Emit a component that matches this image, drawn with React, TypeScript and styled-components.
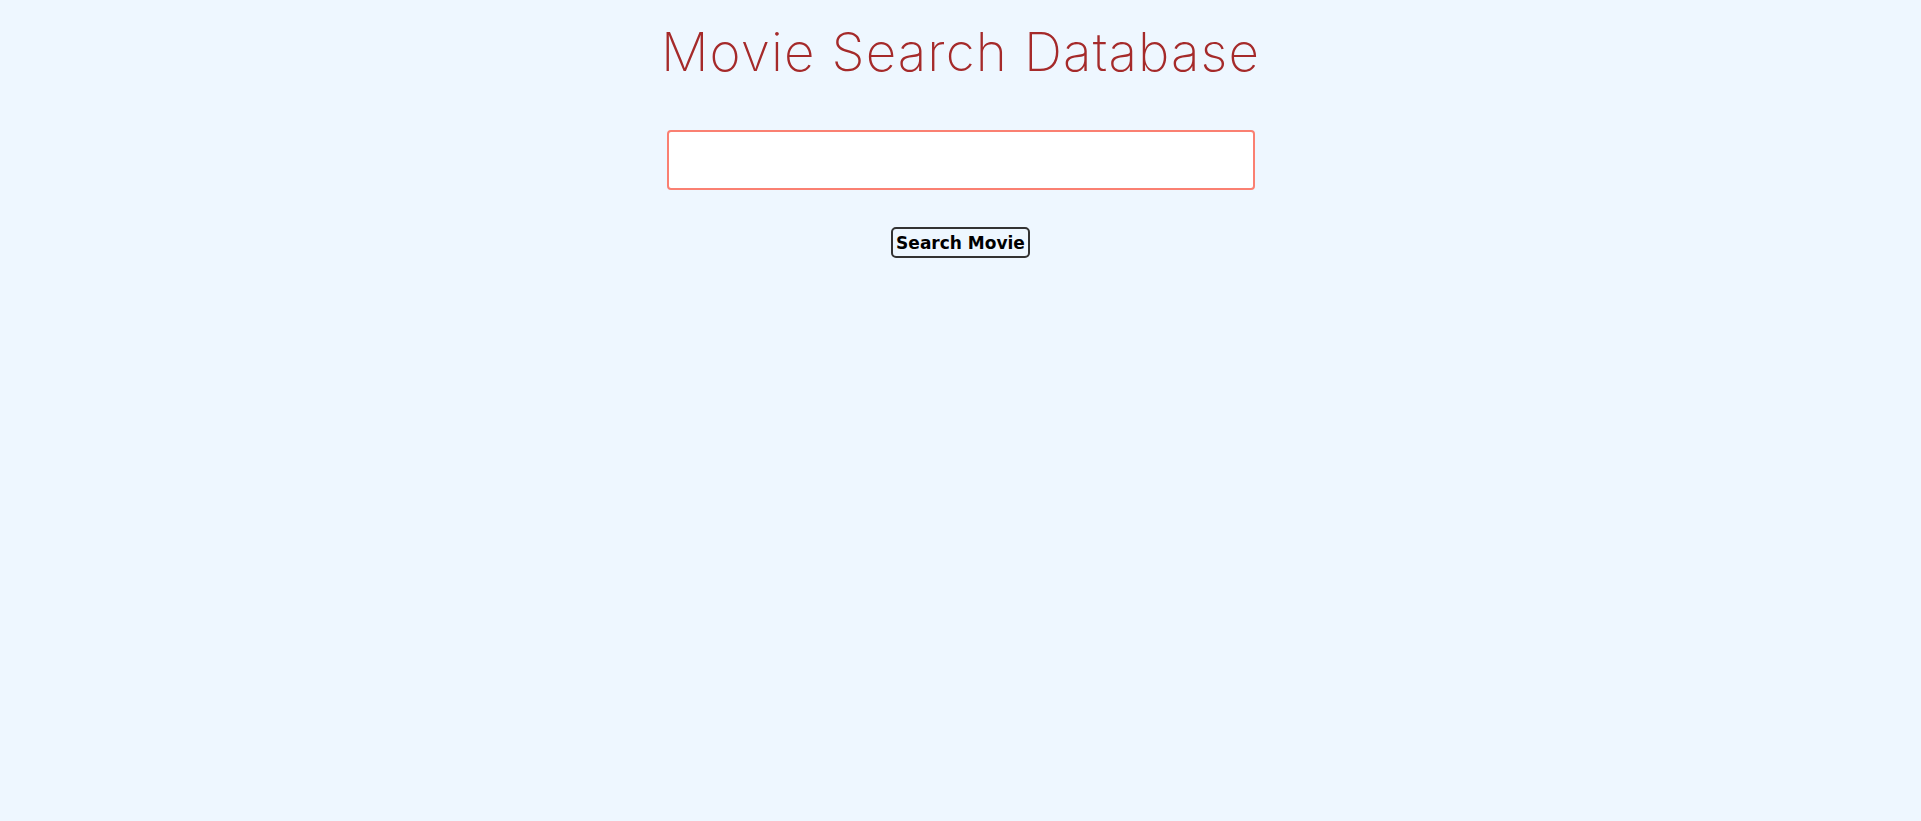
import React from "react";
import styled, { createGlobalStyle } from "styled-components";

const Global = createGlobalStyle`
  html, body {
    margin: 0;
    padding: 0;
    background: #eef7ff;
    min-height: 100%;
  }
  body {
    min-height: 821px;
  }
`;

const Page = styled.main`
  display: flex;
  flex-direction: column;
  align-items: center;
  padding-top: 21px;
  min-height: 821px;
  box-sizing: border-box;
  background: #eef7ff;
`;

const Title = styled.h1`
  margin: 0;
  font-family: "Inter", "Liberation Sans", sans-serif;
  font-weight: 250;
  font-size: 53px;
  line-height: 62px;
  letter-spacing: 1.1px;
  color: #a52a2a;
`;

const Form = styled.form`
  display: flex;
  flex-direction: column;
  align-items: center;
  gap: 37px;
  margin-top: 47px;
`;

const SearchInput = styled.input`
  box-sizing: border-box;
  width: 588px;
  height: 60px;
  border: 2px solid #fa8072;
  border-radius: 4px;
  background: #ffffff;
  outline: none;
  padding: 0 12px;
  font-size: 18px;
`;

const Button = styled.button`
  box-sizing: border-box;
  height: 31px;
  padding: 0 3px;
  border: 2px solid #333333;
  border-radius: 5px;
  background: #eef7ff;
  color: #000;
  font-family: "DejaVu Sans", "Liberation Sans", sans-serif;
  font-weight: 700;
  font-size: 17px;
  cursor: pointer;
`;

export default function App() {
  return (
    <>
      <Global />
      <Page>
        <Title>Movie Search Database</Title>
        <Form onSubmit={(e) => e.preventDefault()}>
          <SearchInput type="text" />
          <Button type="submit">Search Movie</Button>
        </Form>
      </Page>
    </>
  );
}
